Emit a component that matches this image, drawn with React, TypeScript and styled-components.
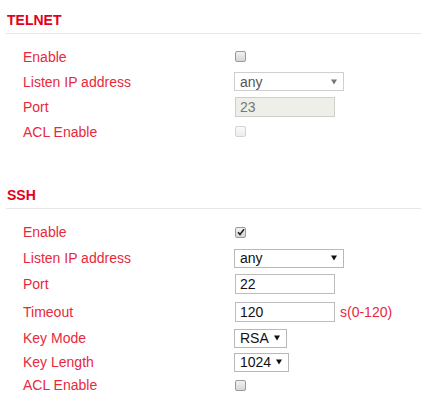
import React from "react";
import styled, { createGlobalStyle } from "styled-components";

const Global = createGlobalStyle`
  html, body { margin: 0; padding: 0; background: #fff; }
  body { font-family: "Liberation Sans", Arial, sans-serif; font-size: 14px; }
`;

const Page = styled.div`
  padding: 12px 0 0 6px;
`;

const Section = styled.section`
  margin-bottom: 43px;
  &:last-child { margin-bottom: 0; }
`;

const Heading = styled.h2`
  margin: 0;
  padding: 0 0 5px 1px;
  font-size: 14px;
  line-height: 16px;
  font-weight: bold;
  color: #e2001a;
  border-bottom: 1px solid #e6e6e6;
`;

const Rows = styled.div`
  padding: 10px 0 0 17px;
`;

const Row = styled.div<{ $h: number }>`
  display: grid;
  grid-template-columns: 211px auto;
  align-items: center;
  height: ${(p) => p.$h}px;
`;

const Label = styled.span`
  color: #e8283c;
  font-size: 14px;
  line-height: 16px;
`;

const Control = styled.div`
  display: flex;
  align-items: center;
  gap: 5px;
`;

const Box = styled.span<{ $disabled?: boolean }>`
  box-sizing: border-box;
  display: inline-flex;
  align-items: center;
  justify-content: center;
  width: 11px;
  height: 11px;
  margin-left: 1px;
  border: 1px solid ${(p) => (p.$disabled ? "#d4d4d4" : "#9a9a9a")};
  border-radius: 2px;
  background: ${(p) =>
    p.$disabled
      ? "linear-gradient(#fafafa, #ededed)"
      : "linear-gradient(#f2f2f2, #d6d6d6)"};
`;

const Select = styled.div<{ $w: number; $disabled?: boolean }>`
  box-sizing: border-box;
  display: flex;
  align-items: center;
  justify-content: space-between;
  width: ${(p) => p.$w}px;
  height: 19px;
  padding: 0 6px 0 5px;
  border: 1px solid ${(p) => (p.$disabled ? "#cfcfcf" : "#b8b8b8")};
  background: #fff;
  color: ${(p) => (p.$disabled ? "#555" : "#111")};
  font-size: 14px;
  line-height: 16px;
`;

const Arrow = styled.svg`
  flex: none;
  display: block;
`;

const Input = styled.div<{ $disabled?: boolean }>`
  box-sizing: border-box;
  display: flex;
  align-items: center;
  width: 100px;
  height: 20px;
  margin-left: 1px;
  padding-left: 4px;
  border: 1px solid ${(p) => (p.$disabled ? "#cfcfc8" : "#bdbdbd")};
  background: ${(p) => (p.$disabled ? "#efefe9" : "#fff")};
  color: ${(p) => (p.$disabled ? "#777" : "#111")};
  font-size: 14px;
  line-height: 16px;
`;

const Hint = styled.span`
  color: #e8283c;
  font-size: 14px;
`;

const Checkbox = ({ checked, disabled }: { checked?: boolean; disabled?: boolean }) => (
  <Box $disabled={disabled}>
    {checked && (
      <svg width="8" height="8" viewBox="0 0 8 8">
        <path d="M1 4.2 L3 6.4 L7 1.2" fill="none" stroke="#222" strokeWidth="1.6" />
      </svg>
    )}
  </Box>
);

const Dropdown = ({ value, w, disabled }: { value: string; w: number; disabled?: boolean }) => (
  <Select $w={w} $disabled={disabled}>
    <span>{value}</span>
    <Arrow width="6" height="6" viewBox="0 0 6 6">
      <path d="M0 0.5 H6 L3 5.5 Z" fill={disabled ? "#777" : "#111"} />
    </Arrow>
  </Select>
);

export default function App() {
  return (
    <Page>
      <Global />
      <Section>
        <Heading>TELNET</Heading>
        <Rows>
          <Row $h={25}>
            <Label>Enable</Label>
            <Control><Checkbox /></Control>
          </Row>
          <Row $h={25}>
            <Label>Listen IP address</Label>
            <Control><Dropdown value="any" w={110} disabled /></Control>
          </Row>
          <Row $h={25}>
            <Label>Port</Label>
            <Control><Input $disabled>23</Input></Control>
          </Row>
          <Row $h={25}>
            <Label>ACL Enable</Label>
            <Control><Checkbox disabled /></Control>
          </Row>
        </Rows>
      </Section>
      <Section>
        <Heading>SSH</Heading>
        <Rows>
          <Row $h={26}>
            <Label>Enable</Label>
            <Control><Checkbox checked /></Control>
          </Row>
          <Row $h={26}>
            <Label>Listen IP address</Label>
            <Control><Dropdown value="any" w={110} /></Control>
          </Row>
          <Row $h={26}>
            <Label>Port</Label>
            <Control><Input>22</Input></Control>
          </Row>
          <Row $h={29}>
            <Label>Timeout</Label>
            <Control><Input>120</Input><Hint>s(0-120)</Hint></Control>
          </Row>
          <Row $h={24}>
            <Label>Key Mode</Label>
            <Control><Dropdown value="RSA" w={53} /></Control>
          </Row>
          <Row $h={24}>
            <Label>Key Length</Label>
            <Control><Dropdown value="1024" w={55} /></Control>
          </Row>
          <Row $h={22}>
            <Label>ACL Enable</Label>
            <Control><Checkbox /></Control>
          </Row>
        </Rows>
      </Section>
    </Page>
  );
}
